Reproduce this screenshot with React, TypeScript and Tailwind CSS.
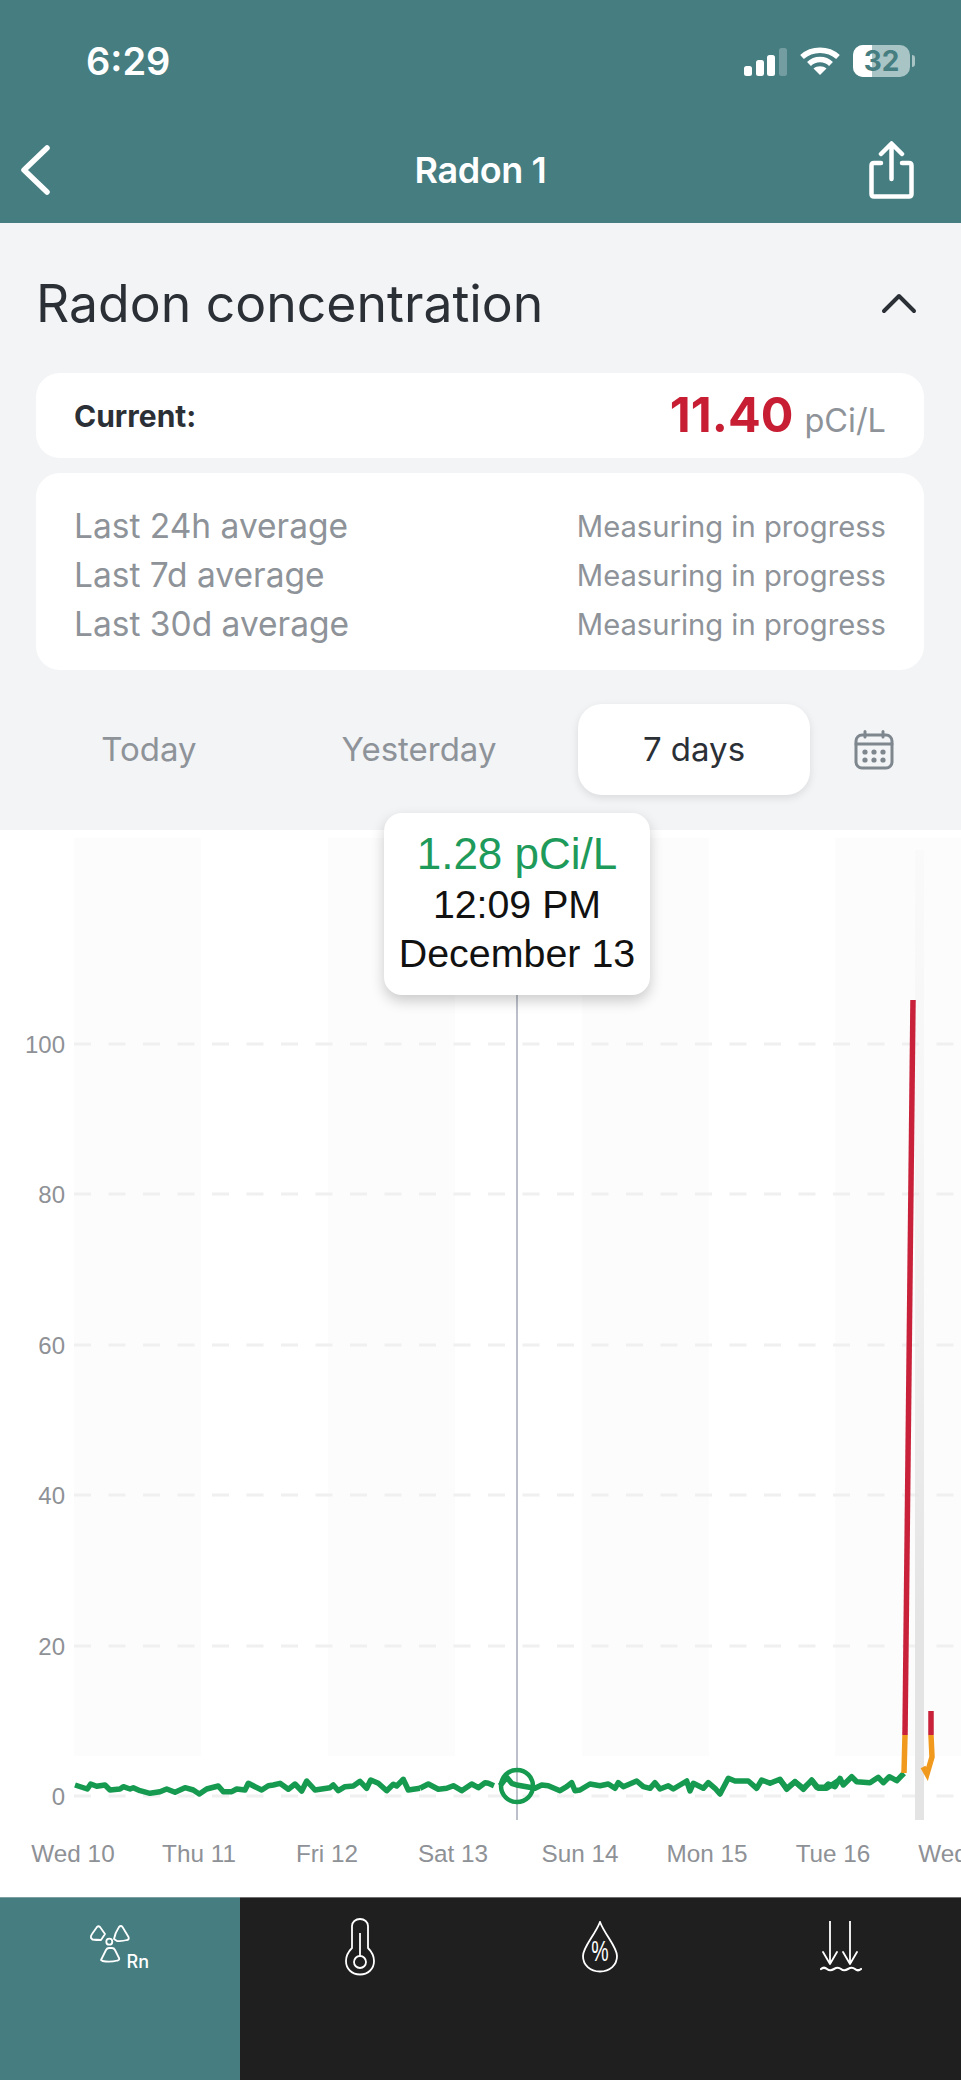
import React from "react";

const toLine = (pts: number[][], ox: number, oy: number, sx = 3) =>
  pts.map(([x, y]) => `${(ox + x / sx).toFixed(1)},${(oy + y / sx).toFixed(1)}`).join(" ");

const part1 = [[225,195],[262,207],[272,192],[290,199],[315,195],[330,210],[360,207],[370,200],[390,207],[400,203],[420,212],[450,220],[480,215],[500,207],[525,217],[555,203],[580,210],[598,222],[620,207],[655,198],[670,215],[695,215],[710,207],[735,210],[745,190],[765,200],[785,210],[805,197],[820,195],[840,190],[865,208],[885,192],[905,213],[920,183],[945,210],[990,203],[1000,195],[1015,212],[1035,200],[1060,198],[1080,184],[1100,205],[1112,180],[1135,190],[1160,212],[1180,193],[1190,198],[1210,178],[1225,210],[1260,205]];
const part2 = [[0,205],[25,192],[55,208],[80,205],[100,197],[125,212],[155,192],[175,203],[195,188],[205,190],[222,197]];
const part3 = [[240,197],[260,172],[275,190],[290,195],[345,205],[365,195],[385,197],[420,212],[440,200],[455,188],[465,212],[480,210],[510,192],[540,197],[565,192],[585,205],[595,188],[610,200],[650,183],[670,200],[690,205],[705,188],[720,207],[745,197],[760,207],[800,183],[810,213],[820,190],[850,205],[865,188],[885,205],[900,222],[925,175],[945,183],[985,183],[1010,205],[1025,180],[1050,190],[1080,178],[1100,208],[1125,185],[1150,208],[1175,180],[1195,205],[1220,205],[1258,180]];
const part4 = [[0,360],[20,385],[45,365],[70,385],[95,362],[110,382],[135,382],[145,372],[165,380],[180,355],[190,375],[215,350],[230,365],[270,368],[295,352],[310,368],[328,350],[350,362],[372,340]];

const yLabels = [
  ["100", 1044],
  ["80", 1194],
  ["60", 1345],
  ["40", 1495],
  ["20", 1646],
  ["0", 1796],
] as const;
const xLabels = [
  ["Wed 10", 73],
  ["Thu 11", 199],
  ["Fri 12", 327],
  ["Sat 13", 453],
  ["Sun 14", 580],
  ["Mon 15", 707],
  ["Tue 16", 833],
  ["Wed 17", 960],
] as const;

function Chart() {
  return (
    <svg viewBox="0 830 961 1067" className="block h-[1067px] w-[961px]">
      <defs>
        <linearGradient id="band" x1="0" y1="0" x2="0" y2="1">
          <stop offset="0" stopColor="#e6e6e6" stopOpacity="0.1" />
          <stop offset="0.3" stopColor="#e6e6e6" stopOpacity="0.3" />
          <stop offset="0.8" stopColor="#e4e4e4" stopOpacity="1" />
          <stop offset="1" stopColor="#e4e4e4" stopOpacity="1" />
        </linearGradient>
      </defs>
      {[74, 328, 582, 835].map((x) => (
        <rect key={x} x={x} y={838} width={x === 835 ? 126 : 127} height={918} fill="#fcfcfc" />
      ))}
      {yLabels.map(([, y]) => (
        <line key={y} x1={74} x2={961} y1={y} y2={y} stroke="#f0f0f0" strokeWidth={3} strokeDasharray="17 17.5" />
      ))}
      <rect x={915} y={850} width={9} height={970} fill="url(#band)" />
      {yLabels.map(([t, y]) => (
        <text key={t} x={65} y={y + 8.5} textAnchor="end" className="fill-[#8e9196] font-['Liberation_Sans'] text-[24px]">
          {t}
        </text>
      ))}
      {xLabels.map(([t, x]) => (
        <text key={t} x={x} y={1862} textAnchor="middle" className="fill-[#8e9196] font-['Liberation_Sans'] text-[24.3px]">
          {t}
        </text>
      ))}
      <line x1={517} x2={517} y1={990} y2={1820} stroke="#b4b9c4" strokeWidth={1.8} />
      <g fill="none" stroke="#159a50" strokeWidth={5.5} strokeLinejoin="round">
        <polyline points={toLine(part1, 0, 1720)} />
        <polyline points={toLine(part2, 420, 1720)} />
        <polyline points={toLine(part3, 420, 1720)} />
        <polyline points={toLine(part4, 780, 1660)} />
      </g>
      <circle cx={517} cy={1786} r={16} fill="none" stroke="#159a50" strokeWidth={4.5} />
      <polyline points="904,1773 905,1735" fill="none" stroke="#f0991c" strokeWidth={5.5} />
      <polyline points="905,1735 913,1000" fill="none" stroke="#c9213a" strokeWidth={5.5} />
      <polyline points="923,1767 927,1774 932,1757 931,1735" fill="none" stroke="#f0991c" strokeWidth={5.5} />
      <polyline points="931,1735 931,1711" fill="none" stroke="#c9213a" strokeWidth={5.5} />
    </svg>
  );
}

function StatusBar() {
  return (
    <div className="flex h-[122px] items-center justify-between pl-[86px] pr-[46px]">
      <span className="text-[38px] font-semibold leading-none text-white">6:29</span>
      <div className="flex items-center">
        <svg width="44" height="28" viewBox="0 0 44 28" className="mr-[12px] mt-[2px]">
          <rect x="0" y="18" width="8" height="10" rx="2.5" fill="#fff" />
          <rect x="12" y="12" width="8" height="16" rx="2.5" fill="#fff" />
          <rect x="23" y="7" width="8" height="21" rx="2.5" fill="#fff" />
          <rect x="35" y="0" width="8" height="28" rx="2.5" fill="#fff" fillOpacity="0.25" />
        </svg>
        <svg width="40" height="28" viewBox="0 0 40 28" className="mr-[13px]" fill="none" stroke="#fff" strokeWidth="5.5">
          <path d="M2 10 C12 1 28 1 38 10" />
          <path d="M9 17 C15 11 25 11 31 17" />
          <path d="M20 28 L13.5 21.5 C17 18.5 23 18.5 26.5 21.5 Z" fill="#fff" stroke="none" />
        </svg>
        <div className="flex items-center">
          <div className="relative flex h-[32px] w-[57px] items-center justify-center overflow-hidden rounded-[10px] bg-[#a9c4c5]">
            <div className="absolute inset-y-0 left-0 w-[19px] bg-white" />
            <span className="relative text-[28px] font-bold leading-none text-[#457d80]">32</span>
          </div>
          <div className="ml-[2px] h-[12px] w-[3px] rounded-r-full bg-[#a9c4c5]" />
        </div>
      </div>
    </div>
  );
}

function NavBar() {
  return (
    <div className="grid h-[96px] grid-cols-[1fr_auto_1fr] items-center px-[20px]">
      <svg width="30" height="50" viewBox="0 0 30 50" fill="none" stroke="#fff" strokeWidth="5.5" strokeLinecap="round" strokeLinejoin="round">
        <path d="M27 3 L4 25 L27 47" />
      </svg>
      <span className="text-[36px] font-semibold leading-none tracking-[-0.4px] text-white">Radon 1</span>
      <svg width="45" height="58" viewBox="0 0 45 58" fill="none" stroke="#fff" strokeWidth="4.5" strokeLinecap="round" strokeLinejoin="round" className="mr-[27px] justify-self-end">
        <path d="M22.5 38 V3 M12 13 L22.5 2.5 L33 13" />
        <path d="M12 22 H5 Q2.5 22 2.5 24.5 V53 Q2.5 55.5 5 55.5 H40 Q42.5 55.5 42.5 53 V24.5 Q42.5 22 40 22 H33" />
      </svg>
    </div>
  );
}

function Row({ label }: { label: string }) {
  return (
    <div className="flex h-[49px] items-center justify-between">
      <span className="text-[33.5px] leading-none text-[#8e9399]">{label}</span>
      <span className="text-[29.2px] leading-none text-[#8e9399]">Measuring in progress</span>
    </div>
  );
}

function Summary() {
  return (
    <div className="pl-[36px] pr-[37px]">
      <div className="flex items-center justify-between pt-[50px] pb-[40px]">
        <h1 className="text-[51.7px] font-normal leading-[60px] text-[#2b2f36]">Radon concentration</h1>
        <svg width="36" height="22" viewBox="0 0 36 22" fill="none" stroke="#2b2f36" strokeWidth="4" strokeLinecap="round" strokeLinejoin="round" className="mr-[7px]">
          <path d="M3 19 L18 4 L33 19" />
        </svg>
      </div>
      <div className="flex h-[85px] items-center justify-between rounded-[24px] bg-white pl-[38px] pr-[38px]">
        <span className="mt-[1px] text-[30px] font-bold leading-none text-[#2b2f36]">Current:</span>
        <span className="flex items-baseline">
          <span className="text-[48.5px] font-bold leading-none text-[#c81e34]">11.40</span>
          <span className="ml-[11px] text-[32.5px] leading-none text-[#8e9399]">pCi/L</span>
        </span>
      </div>
      <div className="mt-[15px] flex h-[197px] flex-col justify-center rounded-[24px] bg-white pl-[38px] pr-[38px] pt-[8px]">
        <Row label="Last 24h average" />
        <Row label="Last 7d average" />
        <Row label="Last 30d average" />
      </div>
    </div>
  );
}

function Tabs() {
  const btn = "flex h-[91px] w-[232px] items-center justify-center rounded-[24px] text-[33px] leading-none";
  return (
    <div className="flex items-center pl-[33px] pt-[34px] pb-[35px]">
      <div className={`${btn} mr-[38px] text-[#8e9399]`}>Today</div>
      <div className={`${btn} mr-[43px] text-[#8e9399]`}>Yesterday</div>
      <div className={`${btn} bg-white text-[#2b2f36] shadow-[0_3px_8px_rgba(0,0,0,0.1)]`}>7 days</div>
      <svg width="40" height="40" viewBox="0 0 40 40" fill="none" stroke="#7e868e" strokeWidth="3" strokeLinecap="round" className="ml-[44px]">
        <rect x="2" y="5" width="36" height="33" rx="6" />
        <path d="M2 14 H38 M11 1.5 V7 M29 1.5 V7" />
        <g fill="#7e868e" stroke="none">
          <circle cx="11" cy="22" r="2.6" />
          <circle cx="20" cy="22" r="2.6" />
          <circle cx="29" cy="22" r="2.6" />
          <circle cx="11" cy="30" r="2.6" />
          <circle cx="20" cy="30" r="2.6" />
          <circle cx="29" cy="30" r="2.6" />
        </g>
      </svg>
    </div>
  );
}

function TabBar() {
  const dark = "flex h-[183px] justify-center border-t border-[#6f6f6f] bg-[#1f1f1f]";
  return (
    <div className="flex">
      <div className="h-[183px] w-[240px] border-t border-[#7da1a3] bg-[#457d80] pl-[60px] pt-[2px]">
        <svg width="130" height="90" viewBox="0 0 130 90" fill="none" stroke="#fff" strokeWidth="1.8" strokeLinejoin="round">
          <path d="M31 38 Q30.5 36 32 34 L37 27 Q38.5 25.5 40 27 L45 34 Q43 37 41 40 Q36 40 32.5 39.5 Z" />
          <path d="M54 39 Q55 33 59 27 Q61 25 62.5 27 L68.5 37 Q69.5 39.5 67 40 Q62 41.5 57 41 Z" />
          <path d="M41 60 L46 50 Q47 48 49 48 L52 48 Q54 48 55 50 L59 58 Q60 60 57.5 60.5 Q50 62.5 42.5 61 Z" />
          <circle cx="49.3" cy="41.7" r="3" />
          <text x="66.5" y="68" fill="#fff" stroke="none" className="text-[18px] font-medium">Rn</text>
        </svg>
      </div>
      <div className={`${dark} w-[240px] pt-[20px]`}>
        <svg width="30" height="58" viewBox="0 0 30 58" fill="none" stroke="#fff" strokeWidth="1.8">
          <path d="M7 30 V8 a8 7 0 0 1 16 0 V30 C27 34 29 38 29 43 C29 51 23 56.5 15 56.5 C7 56.5 1 51 1 43 C1 38 3 34 7 30 Z" />
          <circle cx="15" cy="44" r="6" />
          <path d="M15 15 V38" />
        </svg>
      </div>
      <div className={`${dark} w-[240px] pt-[23px]`}>
        <svg width="36" height="52" viewBox="0 0 36 52" fill="none" stroke="#fff" strokeWidth="1.8">
          <path d="M18 1 C23 14 35 26 35 35 C35 44 28 50.5 18 50.5 C8 50.5 1 44 1 35 C1 26 13 14 18 1 Z" />
          <text transform="translate(18 40) scale(0.85 1.25)" textAnchor="middle" fill="#fff" stroke="none" className="font-['Liberation_Sans'] text-[23px]">%</text>
        </svg>
      </div>
      <div className={`${dark} w-[241px] pt-[23px]`}>
        <svg width="42" height="52" viewBox="0 0 42 52" fill="none" stroke="#fff" strokeWidth="1.8" strokeLinecap="round" strokeLinejoin="round">
          <path d="M10 0 V42 M3 31 L10 43 L17 31" />
          <path d="M30 0 V42 M23 31 L30 43 L37 31" />
          <path d="M1 48 Q4 45.5 7 48 T14 48 T21 48 T28 48 T35 48 T41 48" strokeWidth="2.2" />
        </svg>
      </div>
    </div>
  );
}

export default function App() {
  return (
    <div className="h-[2080px] w-[961px] overflow-hidden bg-[#f3f4f6] font-['Inter',sans-serif]">
      <header className="h-[223px] bg-[#457d80]">
        <StatusBar />
        <NavBar />
      </header>
      <Summary />
      <Tabs />
      <div className="relative bg-white">
        <Chart />
        <div className="absolute left-[384px] top-[-17px] flex h-[182px] w-[266px] flex-col items-center rounded-[18px] bg-white pt-[18px] font-['Liberation_Sans',sans-serif] shadow-[0_6px_14px_rgba(0,0,0,0.2)]">
          <span className="text-[44px] leading-[46px] text-[#1e9a5a]">1.28 pCi/L</span>
          <span className="mt-[3px] text-[39.3px] leading-[49px] text-[#111]">12:09 PM</span>
          <span className="text-[39.4px] leading-[49px] text-[#111]">December 13</span>
        </div>
      </div>
      <TabBar />
    </div>
  );
}
